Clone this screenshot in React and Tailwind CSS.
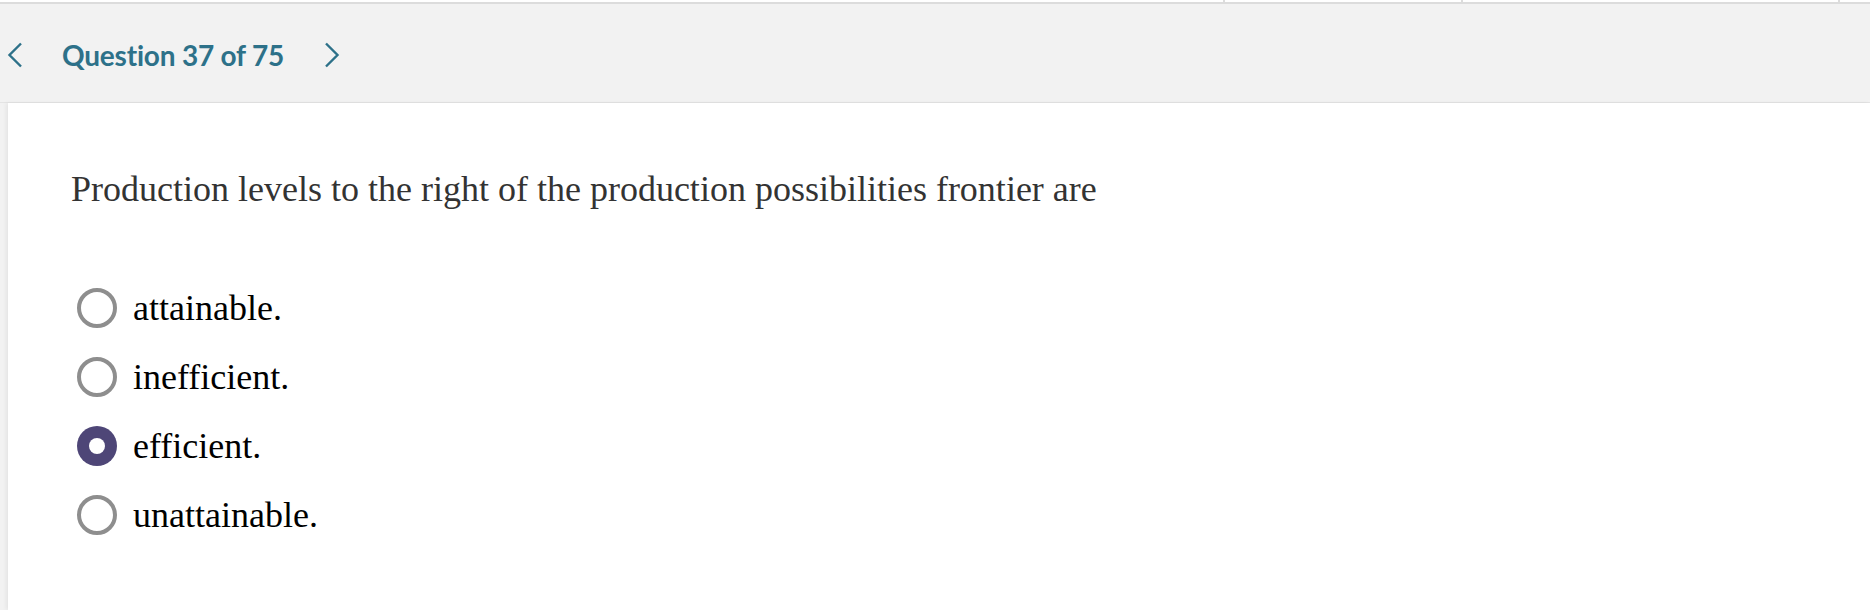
const options = ["attainable.", "inefficient.", "efficient.", "unattainable."];

function Chevron({ dir }) {
  return (
    <svg width="16" height="26" viewBox="0 0 16 26" fill="none" aria-hidden="true">
      <path
        d={dir === "left" ? "M14 1.5 L2.5 13 L14 24.5" : "M2 1.5 L13.5 13 L2 24.5"}
        stroke="#2d7189"
        strokeWidth="2.4"
      />
    </svg>
  );
}

function Radio({ checked }) {
  if (checked) {
    return (
      <span className="flex h-[40px] w-[40px] shrink-0 items-center justify-center rounded-full bg-[#4e4677]">
        <span className="h-[16px] w-[16px] rounded-full bg-white" />
      </span>
    );
  }
  return (
    <span className="h-[40px] w-[40px] shrink-0 rounded-full border-[4px] border-[#8e8e8e] bg-white" />
  );
}

export default function App() {
  const selected = 2;

  return (
    <div className="flex h-[610px] w-full flex-col bg-[#f2f2f2]">
      <div className="flex h-[2px] bg-white">
        <div className="w-[1223px]" />
        <div className="w-[2px] bg-[#dcdcdc]" />
        <div className="w-[236px]" />
        <div className="w-[2px] bg-[#dcdcdc]" />
        <div className="w-[375px]" />
        <div className="w-[2px] bg-[#dcdcdc]" />
      </div>
      <div className="h-[2px] bg-[#dcdcdc]" />

      <header className="flex h-[99px] items-center border-b border-[#e4e4e4] pt-[3px]">
        <button type="button" className="ml-[7px] flex items-center" aria-label="Previous question">
          <Chevron dir="left" />
        </button>
        <h1 className="ml-[39px] font-['Lato',sans-serif] text-[28px] font-bold tracking-[-0.2px] text-[#2d7189]">
          Question 37 of 75
        </h1>
        <button type="button" className="ml-[40px] flex items-center" aria-label="Next question">
          <Chevron dir="right" />
        </button>
      </header>

      <main className="ml-[8px] flex-1 bg-white pl-[63px] pt-[68px] shadow-[-2px_0_4px_rgba(0,0,0,0.06)] font-['Liberation_Serif','Times_New_Roman',serif]">
        <p className="text-[36px] leading-[36px] text-[#333333]">
          Production levels to the right of the production possibilities frontier are
        </p>

        <ul className="ml-[6px] mt-[81px] flex flex-col gap-[29px]">
          {options.map((option, index) => (
            <li key={option} className="flex items-center gap-[16px]">
              <Radio checked={index === selected} />
              <span className="text-[36px] leading-[36px] text-black">{option}</span>
            </li>
          ))}
        </ul>
      </main>
    </div>
  );
}
